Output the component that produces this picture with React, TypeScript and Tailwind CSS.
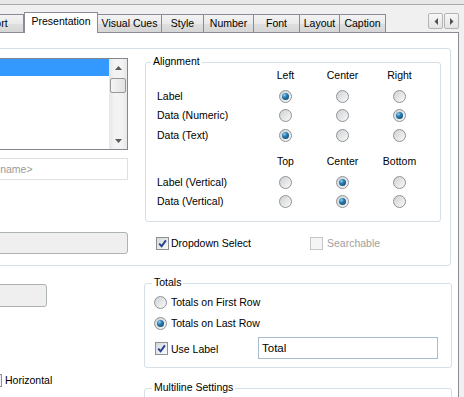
import React from "react";

function Radio({ checked }: { checked?: boolean }) {
  return (
    <span className="flex h-[13px] w-[13px] shrink-0 items-center justify-center rounded-full border border-[#8f9396] bg-[linear-gradient(135deg,#cfd1d3,#f9f9f9)]">
      {checked ? (
        <span className="h-[7px] w-[7px] rounded-full bg-[radial-gradient(circle_at_35%_30%,#8fd3f7_0%,#2c7db3_35%,#0b3b5e_100%)]" />
      ) : null}
    </span>
  );
}

function Check({ checked, disabled }: { checked?: boolean; disabled?: boolean }) {
  return (
    <span
      className={
        disabled
          ? "flex h-[13px] w-[13px] shrink-0 items-center justify-center border border-[#c6c6c6] bg-[#f5f5f5]"
          : "flex h-[13px] w-[13px] shrink-0 items-center justify-center border border-[#8e8f8f] bg-[linear-gradient(135deg,#d3d7dd,#fbfbfc)]"
      }
    >
      {checked ? (
        <svg width="9" height="9" viewBox="0 0 9 9">
          <path d="M1.2 4.6 L3.6 7.2 L7.9 1.4" fill="none" stroke="#243f8c" strokeWidth="1.9" />
        </svg>
      ) : null}
    </span>
  );
}

function Tab({ label, w, selected }: { label: string; w: string; selected?: boolean }) {
  if (selected) {
    return (
      <div className={`${w} flex h-[21px] shrink-0 items-start justify-center border-x border-t border-[#898c95] bg-white pt-[2px] leading-[13px]`}>
        {label}
      </div>
    );
  }
  return (
    <div className={`${w} flex h-[19px] shrink-0 items-center justify-center border-y border-r border-[#898c95] bg-[linear-gradient(#f3f3f3,#eaeaea_50%,#dedede_52%,#d6d6d6)] leading-[13px]`}>
      {label}
    </div>
  );
}

function ArrowBtn({ dir }: { dir: "left" | "right" }) {
  return (
    <div className="flex h-[16px] w-[15px] items-center justify-center rounded-[2px] border border-[#b4b4b4] bg-[linear-gradient(#f7f7f7,#e4e4e4)]">
      <svg width="4" height="7" viewBox="0 0 4 7">
        {dir === "left" ? <path d="M4 0 L0.5 3.5 L4 7 Z" fill="#505050" /> : <path d="M0 0 L3.5 3.5 L0 7 Z" fill="#505050" />}
      </svg>
    </div>
  );
}

function AlignRow({ label, h, sel }: { label: string; h: string; sel: number }) {
  return (
    <div className={`grid ${h} grid-cols-[100px_57px_57px_57px] items-center`}>
      <span>{label}</span>
      {[0, 1, 2].map((i) => (
        <span key={i} className="flex justify-center">
          <Radio checked={sel === i} />
        </span>
      ))}
    </div>
  );
}

function HeadRow({ a, b, c, mt }: { a: string; b: string; c: string; mt: string }) {
  return (
    <div className={`grid h-[14px] grid-cols-[100px_57px_57px_57px] items-center ${mt}`}>
      <span />
      <span className="text-center">{a}</span>
      <span className="text-center">{b}</span>
      <span className="text-center">{c}</span>
    </div>
  );
}

export default function App() {
  return (
    <div className="flex h-[397px] w-[464px] flex-col overflow-hidden bg-[#f0f0f0] font-['Liberation_Sans',Arial,sans-serif] text-[10.5px] leading-[13px] text-black">
      <div className="h-[4px] shrink-0 bg-[#e7e7e7]" />
      <div className="h-[1px] shrink-0 bg-[#a9a9a9]" />
      {/* tab strip */}
      <div className="flex h-[28px] w-[459px] shrink-0 items-end">
        <div className="ml-[-27px] flex h-[19px] w-[51px] shrink-0 items-center justify-center border-y border-r border-[#898c95] bg-[linear-gradient(#f3f3f3,#eaeaea_50%,#dedede_52%,#d6d6d6)]">
          Sort
        </div>
        <Tab label="Presentation" w="w-[74px]" selected />
        <Tab label="Visual Cues" w="w-[64px]" />
        <Tab label="Style" w="w-[42px]" />
        <Tab label="Number" w="w-[50px]" />
        <Tab label="Font" w="w-[46px]" />
        <Tab label="Layout" w="w-[40px]" />
        <Tab label="Caption" w="w-[46px]" />
        <div className="flex h-full flex-1 justify-end border-b border-[#898c95]">
          <div className="mt-[8px] flex gap-[1px]">
            <ArrowBtn dir="left" />
            <ArrowBtn dir="right" />
          </div>
        </div>
      </div>
      {/* panel */}
      <div className="flex w-[459px] flex-1 flex-col overflow-hidden border-r border-[#898c95] bg-white pt-[15px]">
        <div className="ml-[-20px] flex flex-col">
          {/* outer group */}
          <div className="flex h-[218px] w-[471px] items-start rounded-[3px] border border-[#d5dfe5] pl-[10px]">
            {/* left column */}
            <div className="flex w-[137px] flex-col">
              <div className="mt-[9px] flex h-[92px] border border-[#828790] bg-white">
                <div className="flex-1">
                  <div className="h-[17px] bg-[#3399ff]" />
                </div>
                <div className="flex w-[18px] flex-col bg-[linear-gradient(90deg,#e6e6e6,#f3f3f3_30%,#f3f3f3_70%,#e8e8e8)]">
                  <div className="flex h-[17px] items-center justify-center">
                    <svg width="7" height="4" viewBox="0 0 7 4">
                      <path d="M0 4 L3.5 0 L7 4 Z" fill="#5a5a5a" />
                    </svg>
                  </div>
                  <div className="mx-[1px] mt-[2px] h-[15px] rounded-[2px] border border-[#979797] bg-[linear-gradient(90deg,#f4f4f4,#e2e2e2)]" />
                  <div className="flex-1" />
                  <div className="flex h-[17px] items-center justify-center">
                    <svg width="7" height="4" viewBox="0 0 7 4">
                      <path d="M0 0 L3.5 4 L7 0 Z" fill="#5a5a5a" />
                    </svg>
                  </div>
                </div>
              </div>
              <div className="mt-[8px] flex h-[22px] items-center border border-[#dde1e6] pl-[2px] text-[#9a9a9a]">
                &lt;name&gt;
              </div>
              <div className="mt-[52px] h-[22px] rounded-[3px] border border-[#adb2b5] bg-[#efefef]" />
            </div>
            {/* right column */}
            <div className="ml-[17px] flex w-[296px] flex-col">
              <div className="mt-[13px] rounded-[3px] border border-[#d5dfe5] pb-[10px] pl-[11px]">
                <div className="ml-[-6px] mt-[-8px] w-fit bg-white px-[2px] leading-[13px]">Alignment</div>
                <HeadRow a="Left" b="Center" c="Right" mt="mt-0" />
                <div className="mt-[4px]" />
                <AlignRow label="Label" h="h-[20px]" sel={0} />
                <AlignRow label="Data (Numeric)" h="h-[19px]" sel={2} />
                <AlignRow label="Data (Text)" h="h-[20px]" sel={0} />
                <HeadRow a="Top" b="Center" c="Bottom" mt="mt-[9px]" />
                <div className="mt-[4px]" />
                <AlignRow label="Label (Vertical)" h="h-[20px]" sel={1} />
                <AlignRow label="Data (Vertical)" h="h-[19px]" sel={1} />
              </div>
              <div className="ml-[11px] mt-[11px] flex h-[20px] items-center">
                <div className="flex w-[154px] items-center gap-[2px]">
                  <Check checked />
                  <span>Dropdown Select</span>
                </div>
                <div className="flex items-center gap-[4px] text-[#a0a0a0]">
                  <Check disabled />
                  <span>Searchable</span>
                </div>
              </div>
            </div>
          </div>
          {/* lower section */}
          <div className="flex">
            <div className="flex w-[164px] shrink-0 flex-col">
              <div className="ml-[11px] mt-[18px] h-[23px] w-[56px] rounded-[3px] border border-[#adb2b5] bg-[#efefef]" />
              <div className="ml-[9px] mt-[65px] flex h-[16px] items-center gap-[3px]">
                <Check />
                <span>Horizontal</span>
              </div>
            </div>
            <div className="flex w-[308px] flex-col">
              <div className="mt-[17px] rounded-[3px] border border-[#d5dfe5] pb-[8px] pl-[9px]">
                <div className="ml-[-2px] mt-[-8px] w-fit bg-white px-[2px] leading-[13px]">Totals</div>
                <div className="mt-[4px] flex h-[18px] items-center gap-[4px]">
                  <Radio />
                  <span>Totals on First Row</span>
                </div>
                <div className="mt-[3px] flex h-[18px] items-center gap-[4px]">
                  <Radio checked />
                  <span>Totals on Last Row</span>
                </div>
                <div className="mt-[5px] flex h-[22px] items-center">
                  <div className="ml-[1px] flex w-[103px] items-center gap-[3px]">
                    <Check checked />
                    <span className="mt-[3px]">Use Label</span>
                  </div>
                  <div className="flex h-[22px] w-[180px] items-center border border-[#a9bccf] bg-white pl-[3px] text-[11.5px]">
                    Total
                  </div>
                </div>
              </div>
              <div className="mt-[20px] h-[60px] rounded-[3px] border border-[#d5dfe5]">
                <div className="ml-[7px] mt-[-8px] w-fit bg-white px-[2px] leading-[13px]">Multiline Settings</div>
              </div>
            </div>
          </div>
        </div>
      </div>
    </div>
  );
}
